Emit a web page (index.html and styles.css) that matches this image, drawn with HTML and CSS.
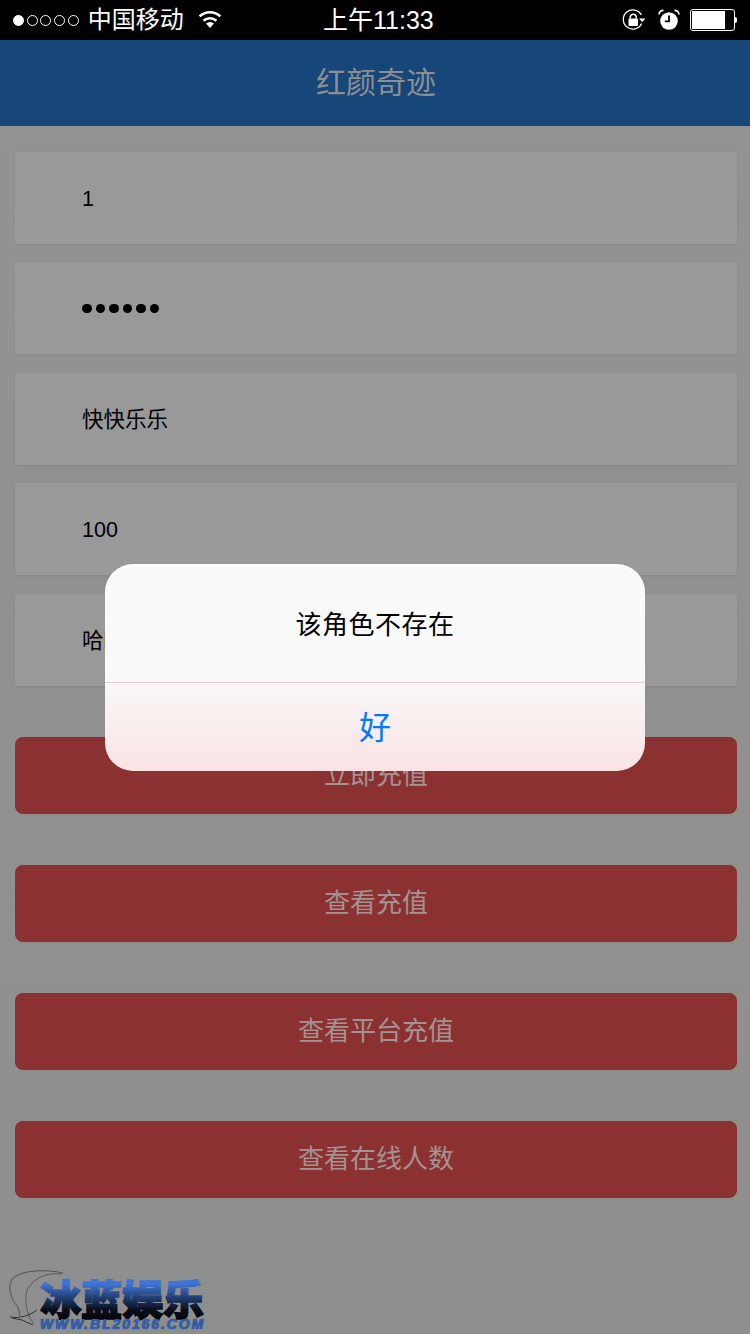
FILE: index.html
```html
<!DOCTYPE html>
<html lang="en">
  <head>
    <meta charset="UTF-8" />
    <meta name="viewport" content="width=device-width, initial-scale=1.0" />
    <title>红颜奇迹</title>
    <link rel="stylesheet" href="styles.css">
  </head>

  <body>
    <div class="status-bar">
      <div class="status-left">
        <div class="signal">
          <span class="dot on"></span>
          <span class="dot"></span>
          <span class="dot"></span>
          <span class="dot"></span>
          <span class="dot"></span>
        </div>
        <span class="carrier">中国移动</span>
        <svg class="wifi" width="24" height="18" viewBox="0 0 24 18">
          <path d="M12 18 L8 13.6 A6 6 0 0 1 16 13.6 Z" fill="#fff" />
          <path d="M5.6 10.8 A9.4 9.4 0 0 1 18.4 10.8" fill="none" stroke="#fff" stroke-width="2.6" />
          <path d="M1.6 6.4 A15 15 0 0 1 22.4 6.4" fill="none" stroke="#fff" stroke-width="2.6" />
        </svg>
      </div>
      <span class="time">上午11:33</span>
      <div class="status-right">
        <svg width="24" height="24" viewBox="0 0 24 24">
          <path d="M19.6 15.5 A9.6 9.6 0 1 1 19.4 7" fill="none" stroke="#fff" stroke-width="1.3" />
          <path d="M17 10.5 H23.5 L20.2 14 Z" fill="#fff" />
          <rect x="6.5" y="10.5" width="9.5" height="7.5" rx="1" fill="#fff" />
          <path d="M8.3 10.5 V8.6 A3 3 0 0 1 14.2 8.6 V10.5" fill="none" stroke="#fff" stroke-width="1.5" />
        </svg>
        <svg class="alarm" width="22" height="22" viewBox="0 0 22 22">
          <circle cx="11" cy="12" r="8.8" fill="#fff" />
          <path d="M11 6.5 V12.4 H6.8" fill="none" stroke="#000" stroke-width="1.8" />
          <path d="M1 5.5 A4.6 4.6 0 0 1 5.5 1.4 M21 5.5 A4.6 4.6 0 0 0 16.5 1.4" fill="none" stroke="#fff" stroke-width="1.6" />
        </svg>
        <div class="battery">
          <div class="battery-body"><div class="battery-level"></div></div>
          <div class="battery-nub"></div>
        </div>
      </div>
    </div>

    <header class="title-bar">
      <h1>红颜奇迹</h1>
    </header>

    <main class="content">
      <div class="field">1</div>
      <div class="field">
        <div class="password">
          <span></span><span></span><span></span><span></span><span></span><span></span>
        </div>
      </div>
      <div class="field">快快乐乐</div>
      <div class="field">100</div>
      <div class="field">哈哈</div>

      <div class="actions">
        <button>立即充值</button>
        <button>查看充值</button>
        <button>查看平台充值</button>
        <button>查看在线人数</button>
      </div>
    </main>

    <div class="alert">
      <p class="alert-message">该角色不存在</p>
      <div class="alert-button">好</div>
    </div>

    <div class="watermark">
      <svg class="rod" width="60" height="62" viewBox="0 0 60 62">
        <path d="M55 3 C38 -1 14 0 5 8 C-1 15 2 29 10 37 L12 46" fill="none" stroke="#3a3a3a" stroke-width="0.7" />
        <path d="M54 4 C38 2 27 8 20 18 C16 27 18 40 22 48 L26 54" fill="none" stroke="#444" stroke-width="0.7" />
        <path d="M2 47 C12 49 22 45 29 40 M4 48 L14 50 L25 55" fill="none" stroke="#333" stroke-width="1" />
      </svg>
      <svg class="brand" width="176" height="64" viewBox="0 0 176 64">
        <defs>
          <linearGradient id="brandFill" gradientUnits="userSpaceOnUse" x1="0" y1="18" x2="0" y2="52">
            <stop offset="0" stop-color="#3f74d6" />
            <stop offset="0.75" stop-color="#08101e" />
            <stop offset="1" stop-color="#04060b" />
          </linearGradient>
        </defs>
        <text x="1" y="49" class="brand-text" fill="url(#brandFill)" stroke="url(#brandFill)" stroke-width="1.6">冰蓝娱乐</text>
      </svg>
      <div class="brand-url">WWW.BL20166.COM</div>
    </div>
  </body>
</html>
```

FILE: styles.css
```css
html,
body {
  margin: 0;
  padding: 0;
  height: 100%;
}

body {
  position: relative;
  height: 1334px;
  overflow: hidden;
  display: flex;
  flex-direction: column;
  font-family: "Liberation Sans", "Noto Sans CJK SC", sans-serif;
  background: linear-gradient(#939393, #8e8e8e);
}

.status-bar {
  height: 40px;
  flex-shrink: 0;
  display: flex;
  align-items: center;
  justify-content: space-between;
  background: #000;
  color: #fff;
  padding: 0 13px;
  position: relative;
}

.status-left {
  display: flex;
  align-items: center;
}

.signal {
  display: flex;
  gap: 2.7px;
}

.dot {
  width: 9px;
  height: 9px;
  border: 1px solid #fff;
  border-radius: 50%;
}

.dot.on {
  background: #fff;
}

.carrier {
  font-size: 24px;
  line-height: 30px;
  margin-left: 9px;
}

.wifi {
  margin-left: 14px;
  margin-top: -2px;
}

.time {
  position: absolute;
  left: 323px;
  top: 2px;
  font-size: 25px;
  line-height: 36px;
}

.status-right {
  display: flex;
  align-items: center;
}

.alarm {
  margin-left: 12px;
}

.battery {
  display: flex;
  align-items: center;
  margin-left: 10px;
}

.battery-body {
  width: 41px;
  height: 18px;
  border: 1px solid #fff;
  border-radius: 3px;
  padding: 1px;
}

.battery-level {
  width: 33px;
  height: 100%;
  background: #fff;
}

.battery-nub {
  width: 2px;
  height: 6px;
  background: #fff;
  border-radius: 0 2px 2px 0;
}

.title-bar {
  height: 86px;
  flex-shrink: 0;
  display: flex;
  align-items: center;
  justify-content: center;
  background: #174679;
  padding: 0 0 6px 2px;
  box-sizing: border-box;
}

.title-bar h1 {
  margin: 0;
  font-size: 30px;
  font-weight: normal;
  color: #8a8f96;
}

.content {
  padding: 26px 13px 0 15px;
}

.field {
  box-sizing: border-box;
  height: 92px;
  margin-bottom: 18.45px;
  padding: 2px 0 0 67px;
  display: flex;
  align-items: center;
  background: #999;
  box-shadow: 0 1px 2px rgba(0, 0, 0, 0.08);
  color: #000;
  font-size: 21.5px;
  line-height: 24px;
}

.password {
  display: flex;
  gap: 4px;
  margin-top: -2px;
}

.password span {
  width: 9.5px;
  height: 9.5px;
  border-radius: 50%;
  background: #000;
}

.actions {
  display: flex;
  flex-direction: column;
  gap: 51px;
  margin-top: 51.2px;
}

button {
  height: 77px;
  border: none;
  border-radius: 8px;
  padding: 0 0 5px;
  background: #8b3131;
  color: #a39393;
  font-family: inherit;
  font-size: 26px;
  cursor: pointer;
}

.alert {
  position: absolute;
  left: 105px;
  top: 564px;
  width: 540px;
  height: 207px;
  border-radius: 28px;
  overflow: hidden;
  background: linear-gradient(#fafafa, #f9f9f9 55%, #f9e3e3);
  text-align: center;
}

.alert-message {
  margin: 0;
  height: 119px;
  line-height: 122px;
  font-size: 26px;
  letter-spacing: 0.5px;
  color: #000;
  box-sizing: border-box;
  border-bottom: 1px solid #e0ccd2;
}

.alert-button {
  height: 88px;
  line-height: 90px;
  font-size: 32px;
  color: #007aff;
}

.watermark {
  position: absolute;
  left: 8px;
  top: 1270px;
  width: 200px;
  height: 62px;
}

.rod {
  position: absolute;
  left: 0;
  top: 0;
}

.brand {
  position: absolute;
  left: 31px;
  top: -4px;
}

.brand-text {
  font-family: "Noto Sans CJK SC", sans-serif;
  font-size: 41px;
  font-weight: 900;
}

.brand-url {
  position: absolute;
  left: 32px;
  top: 48px;
  font-size: 14px;
  line-height: 13px;
  font-weight: bold;
  font-style: italic;
  letter-spacing: 1.9px;
  white-space: nowrap;
  color: #2f62c4;
  text-shadow: 0 0 1px #0a1a3a;
}
```
